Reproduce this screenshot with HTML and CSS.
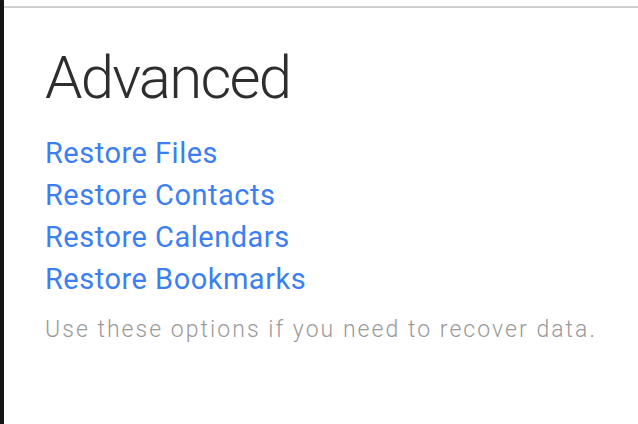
FILE: index.html
```html
<!DOCTYPE html>
<html>
<head>
<meta charset="utf-8">
<link rel="stylesheet" href="styles.css">
</head>
<body>
<div class="frame">
  <div class="edge"></div>
  <div class="pane">
    <div class="rule"></div>
    <section class="section">
      <h1 class="title">Advanced</h1>
      <ul class="links">
        <li><a href="#" class="link">Restore Files</a></li>
        <li><a href="#" class="link">Restore Contacts</a></li>
        <li><a href="#" class="link">Restore Calendars</a></li>
        <li><a href="#" class="link">Restore Bookmarks</a></li>
      </ul>
      <p class="note">Use these options if you need to recover data.</p>
    </section>
  </div>
</div>
</body>
</html>
```
FILE: styles.css
```css
html, body {
  margin: 0;
  padding: 0;
  background: #ffffff;
}
.frame {
  display: flex;
  width: 638px;
  height: 424px;
  overflow: hidden;
}
.edge {
  width: 4px;
  background: #141414;
  flex: none;
}
.pane {
  flex: 1;
  padding-top: 6px;
  background: #ffffff;
}
.rule {
  height: 2px;
  background: #cfcfcf;
}
.section {
  padding: 0 0 0 41px;
  font-family: Roboto, "Liberation Sans", sans-serif;
}
.title {
  margin: 35px 0 0 0;
  font-size: 60px;
  line-height: 70px;
  font-weight: 300;
  color: #2e2e2e;
  letter-spacing: -1.8px;
}
.links {
  list-style: none;
  margin: 19px 0 0 0;
  padding: 0;
}
.links li {
  line-height: 42px;
  height: 42px;
}
.link {
  font-size: 29px;
  color: #3d7ff0;
  text-decoration: none;
  font-weight: 400;
  letter-spacing: 0.5px;
}
.note {
  margin: 15px 0 0 0;
  font-size: 23px;
  line-height: 30px;
  font-weight: 300;
  color: #9a9a9a;
  letter-spacing: 2.05px;
}
```
